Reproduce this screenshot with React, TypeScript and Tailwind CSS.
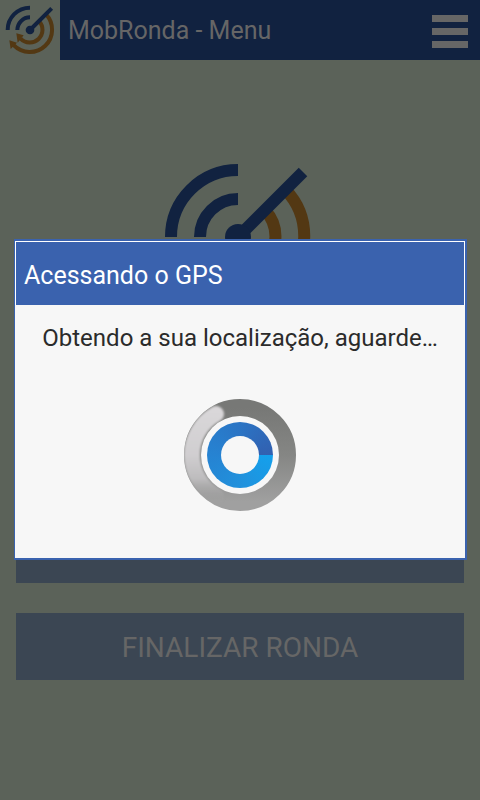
import { useId } from "react"

const NAVY = "#112240"
const ORANGE = "#533813"

function Logo({ className }: { className: string }) {
  return (
    <svg viewBox="-75 -75 150 150" className={className} role="img" aria-label="MobRonda">
      <g fill="none" stroke={ORANGE} strokeWidth={12}>
        <path d="M47.4 -47.4A67 67 0 1 1 -49 45.7" />
        <path d="M26.9 -26.9A38 38 0 1 1 -28 25.7" />
      </g>
      <path d="M-62 31L-39 38L-58 57ZM-41 10L-19 16L-37 38Z" fill={ORANGE} />
      <g fill="none" stroke={NAVY} strokeWidth={12}>
        <path d="M-67 0A67 67 0 0 1 0 -67" />
        <path d="M-38 0A38 38 0 0 1 0 -38" />
        <path d="M0 0L65 -65" />
      </g>
      <circle r={13} fill={NAVY} />
    </svg>
  )
}

function Spinner() {
  const id = useId()
  return (
    <svg viewBox="0 0 112 112" className="size-28" role="img" aria-label="Carregando">
      <defs>
        <linearGradient id={`${id}ring`} x1="0" y1="0" x2="0" y2="1">
          <stop offset="0" stopColor="#777876" />
          <stop offset="0.5" stopColor="#858684" />
          <stop offset="1" stopColor="#a0a0a0" />
        </linearGradient>
        <linearGradient id={`${id}shine`} gradientUnits="userSpaceOnUse" x1="0" y1="8" x2="0" y2="104">
          <stop offset="0" stopColor="#dad8da" />
          <stop offset="0.5" stopColor="#d0ced0" />
          <stop offset="0.75" stopColor="#bdbcbd" />
          <stop offset="1" stopColor="#a0a0a0" stopOpacity="0" />
        </linearGradient>
        <filter id={`${id}soft`} filterUnits="userSpaceOnUse" x="-10" y="-10" width="132" height="132">
          <feGaussianBlur stdDeviation="1" />
        </filter>
        <clipPath id={`${id}clip`}>
          <circle cx={56} cy={56} r={56} />
        </clipPath>
      </defs>
      {/* grey ring with the light streak on its left side */}
      <circle cx={56} cy={56} r={47} fill="none" stroke={`url(#${id}ring)`} strokeWidth={18} />
      <g clipPath={`url(#${id}clip)`}>
        <path
          d="M32 15A47 47 0 0 0 32 97"
          fill="none"
          stroke={`url(#${id}shine)`}
          strokeWidth={16}
          strokeLinecap="round"
          filter={`url(#${id}soft)`}
        />
      </g>
      <circle cx={56} cy={56} r={39} fill="#f7f7f7" />
      <foreignObject x={23} y={23} width={66} height={66}>
        <div className="size-full rounded-full bg-[conic-gradient(from_90deg,#14a0ec,#2191dc_25%,#2683d2_50%,#2b74c4_75%,#3260b0)]" />
      </foreignObject>
      <circle cx={56} cy={56} r={19} fill="#f7f7f7" />
    </svg>
  )
}

function MenuButton({ label }: { label: string }) {
  return (
    <button type="button" className="h-[67px] w-full bg-[#3b4653] pt-0.5 text-[28px] text-[#666666]">
      {label}
    </button>
  )
}

export default function App() {
  return (
    <div className="relative flex min-h-screen flex-col bg-[#5b6259] font-['Roboto',sans-serif]">
      <header className="flex h-15 items-center bg-[#112240] pr-3">
        <div className="flex size-15 items-center justify-center bg-[#5b6259]">
          <Logo className="size-[50px]" />
        </div>
        <h1 className="flex-1 pt-0.5 pl-2 text-[25px] text-[#666666]">MobRonda - Menu</h1>
        <button type="button" aria-label="Abrir menu" className="flex w-9 flex-col gap-[6px] pt-[3px]">
          <span className="h-[7px] bg-[#666666]" />
          <span className="h-[7px] bg-[#666666]" />
          <span className="h-[7px] bg-[#666666]" />
        </button>
      </header>

      <main className="flex flex-1 flex-col items-center px-4 pt-[102px]">
        <Logo className="mr-1 size-[150px]" />
        <div className="mt-[204px] flex w-full flex-col gap-[30px]">
          <MenuButton label="MARCAR LOCAL" />
          <MenuButton label="FINALIZAR RONDA" />
        </div>
      </main>

      <div className="absolute inset-0 flex items-center justify-center pr-[13px] pb-px pl-[14px]">
        <section
          role="dialog"
          aria-labelledby="gps-title"
          className="w-full border-2 border-l-1 border-[#3a62ae] bg-[#f7f7f7]"
        >
          <h2
            id="gps-title"
            className="flex h-16 items-center border border-b-0 border-white bg-[#3a62ae] px-2 pt-1 text-[25px] text-white"
          >
            Acessando o GPS
          </h2>
          <p className="pt-[17px] text-center text-[24px] leading-8 text-[#2b2b2b]">
            Obtendo a sua localização, aguarde…
          </p>
          <div className="flex justify-center pt-[45px] pb-[47px]">
            <Spinner />
          </div>
        </section>
      </div>
    </div>
  )
}
